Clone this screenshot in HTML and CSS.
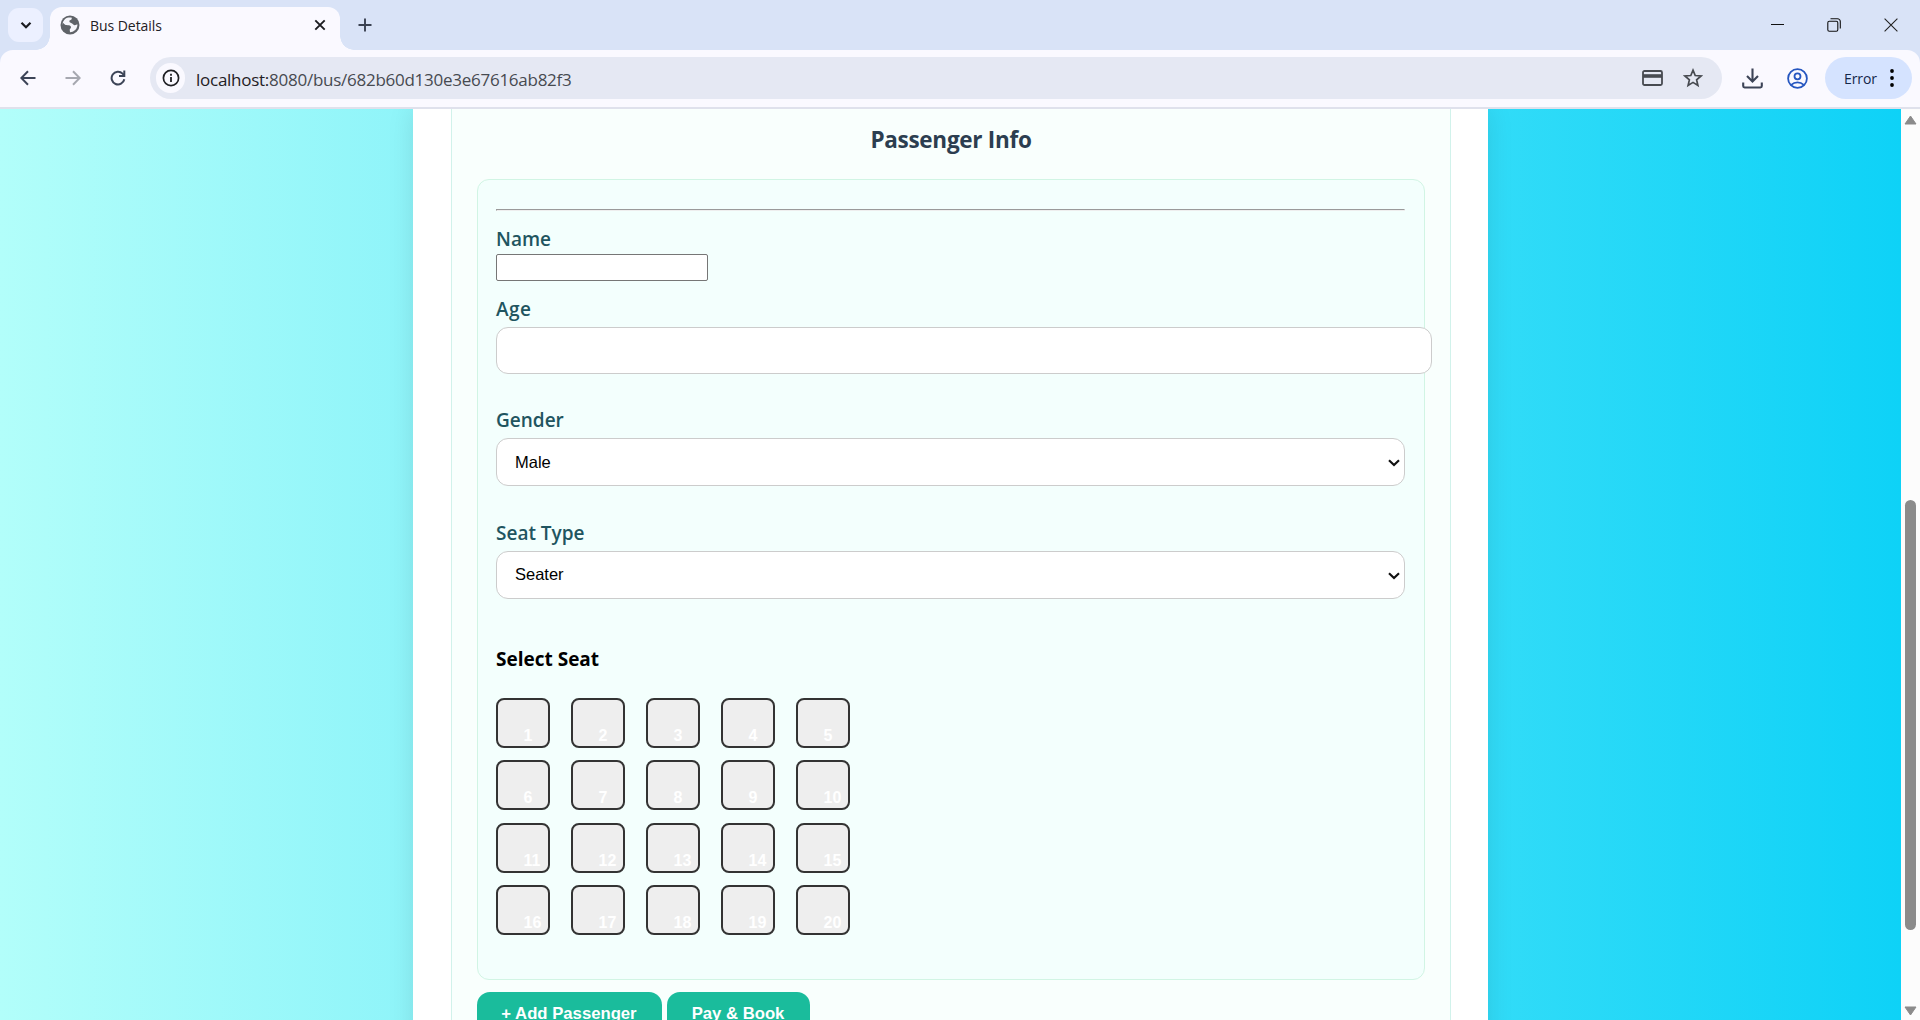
FILE: index.html
```html
<!DOCTYPE html>
<html lang="en">
<head>
<meta charset="utf-8">
<title>Bus Details</title>
<link rel="stylesheet" href="styles.css">
</head>
<body>
<div class="browser">
  <header class="tabstrip">
    <div class="tabmenu"><svg width="12" height="9" viewBox="0 0 12 9"><path d="M1.5 1.8 6 6.3l4.500-4.500" fill="none" stroke="#1b1c20" stroke-width="2.2"/></svg></div>
    <div class="tab">
      <svg width="20" height="20" viewBox="0 0 20 20"><circle cx="10" cy="10" r="9.500" fill="#5f6368"/><path d="M11.500 2.500C12.500 4 11 5 9.500 5.500 9 7 10 7.500 11 8c2 .5 2 2 3.500 2.200 1.200.2 2.200-.8 3-.7-.1 3-1.500 5.300-3.800 6.600-.6.600-1.700 1-3.700 1.200l-.3-2.500c.2-1.500 1.300-1.200 1.300-2.500 0-1.400-1.500-2-3-2L2.500 9.500C2.700 6 5 3 8.500 2.400Z" fill="#f6f6fb"/><path d="m2.700 7.500 4.800 4.800v2l2 2.800C5.500 17 2.500 14 2.500 10Z" fill="#5f6368"/></svg>
      <span class="tabtitle">Bus Details</span>
      <svg class="tabclose" width="12" height="12" viewBox="0 0 12 12"><path d="m1.300 1.300 9.400 9.400m0-9.400-9.400 9.400" stroke="#1b1c20" stroke-width="1.900"/></svg>
      <i class="flare flareleft"></i><i class="flare flareright"></i>
    </div>
    <svg class="newtab" width="14" height="14" viewBox="0 0 14 14"><path d="M7 .5v13M.5 7h13" stroke="#3b4252" stroke-width="1.900"/></svg>
    <div class="windowbtns">
      <svg width="13" height="14" viewBox="0 0 13 14"><path d="M0 6.500h13" stroke="#111"/></svg>
      <svg width="14" height="14" viewBox="0 0 14 14"><rect x=".8" y="3.200" width="10" height="10" rx="1.500" fill="none" stroke="#111" stroke-width="1.100"/><path d="M3.500.8h7a2.800 2.800 0 0 1 2.800 2.800v7" fill="none" stroke="#111" stroke-width="1.100"/></svg>
      <svg width="14" height="14" viewBox="0 0 14 14"><path d="m.6.6 12.800 12.800m0-12.800L.6 13.400" stroke="#222" stroke-width="1.100"/></svg>
    </div>
  </header>
  <nav class="toolbar">
    <svg class="back" width="16" height="16" viewBox="0 0 16 16"><path d="M15.500 8H1.500M8 1.300 1.300 8 8 14.700" fill="none" stroke="#3c4457" stroke-width="2"/></svg>
    <svg class="forward" width="16" height="16" viewBox="0 0 16 16"><path d="M.5 8h14M8 1.300 14.700 8 8 14.700" fill="none" stroke="#a6a8b0" stroke-width="2"/></svg>
    <svg class="reload" width="16" height="16" viewBox="0 0 16 16"><path d="M14.300 9.300A6.400 6.400 0 1 1 12.600 3.600l1.200 1.400" fill="none" stroke="#3c4457" stroke-width="2"/><path d="M14.300.5v5.500H9" fill="none" stroke="#3c4457" stroke-width="2"/></svg>
    <div class="omnibox">
      <span class="siteinfo"><svg width="18" height="18" viewBox="0 0 18 18"><circle cx="9" cy="9" r="7.600" fill="none" stroke="#1f2024" stroke-width="1.700"/><path d="M9 8v5M9 4.800v1.900" stroke="#1f2024" stroke-width="1.800"/></svg></span>
      <span class="url"><b>localhost:</b>8080/bus/682b60d130e3e67616ab82f3</span>
      <svg width="21" height="16" viewBox="0 0 21 16"><rect x="1" y="1" width="19" height="14" rx="1.500" fill="none" stroke="#474a50" stroke-width="1.800"/><path d="M1 6h19" stroke="#474a50" stroke-width="3.600"/></svg>
      <svg class="star" width="20" height="20" viewBox="0 0 20 20"><path d="m10 2.200 2.200 5.300 5.800.5-4.400 3.800 1.300 5.600-4.900-3-4.900 3 1.300-5.600L2 8l5.800-.5Z" fill="none" stroke="#474a50" stroke-width="1.700"/></svg>
    </div>
    <svg class="download" width="21" height="21" viewBox="0 0 21 21"><path d="M10.500.5v12.500M5 8l5.500 5.500L16 8M1.200 14.500v3.600c0 .8.500 1.400 1.400 1.400h15.800c.9 0 1.400-.6 1.400-1.400v-3.600" fill="none" stroke="#3c4457" stroke-width="2.100"/></svg>
    <svg class="profile" width="21" height="21" viewBox="0 0 21 21"><circle cx="10.500" cy="10.500" r="9.400" fill="none" stroke="#2556c0" stroke-width="1.800"/><circle cx="10.500" cy="8.300" r="3" fill="none" stroke="#2556c0" stroke-width="1.800"/><path d="M4.200 16.800c3.600-3.300 9-3.300 12.600 0" fill="none" stroke="#2556c0" stroke-width="1.800"/></svg>
    <div class="errorpill">Error<svg width="4" height="18" viewBox="0 0 4 18"><circle cx="2" cy="2" r="1.900"/><circle cx="2" cy="9" r="1.900"/><circle cx="2" cy="16" r="1.900"/></svg></div>
  </nav>
  <main class="viewport">
    <div class="page">
      <div class="container">
        <section class="booking">
          <h2>Passenger Info</h2>
          <div class="passenger">
            <hr>
            <div class="field name"><label>Name</label><input class="plain" type="text"></div>
            <div class="field age"><label>Age</label><input class="wide" type="text"></div>
            <div class="field"><label>Gender</label><div class="select">Male<svg width="12" height="8" viewBox="0 0 12 8"><path d="m1 1.300 5 4.700 5-4.700" fill="none" stroke="#111" stroke-width="2.200"/></svg></div></div>
            <div class="field"><label>Seat Type</label><div class="select">Seater<svg width="12" height="8" viewBox="0 0 12 8"><path d="m1 1.300 5 4.700 5-4.700" fill="none" stroke="#111" stroke-width="2.200"/></svg></div></div>
            <h4>Select Seat</h4>
            <div class="seats">
              <span>1</span><span>2</span><span>3</span><span>4</span><span>5</span>
              <span>6</span><span>7</span><span>8</span><span>9</span><span>10</span>
              <span>11</span><span>12</span><span>13</span><span>14</span><span>15</span>
              <span>16</span><span>17</span><span>18</span><span>19</span><span>20</span>
            </div>
          </div>
          <div class="actions"><button class="add">+ Add Passenger</button><button class="pay">Pay &amp; Book</button></div>
        </section>
      </div>
    </div>
    <aside class="scrollbar">
      <svg width="13" height="10" viewBox="0 0 13 10"><path d="M6.500 1 12 9H1Z" fill="#8b8b8b" stroke="#8b8b8b" stroke-linejoin="round"/></svg>
      <div class="thumb"></div>
      <svg width="13" height="10" viewBox="0 0 13 10"><path d="M6.500 9 12 1H1Z" fill="#8b8b8b" stroke="#8b8b8b" stroke-linejoin="round"/></svg>
    </aside>
  </main>
</div>
</body>
</html>
```
FILE: styles.css
```css
* { box-sizing: border-box; }
body { margin: 0; font-family: "Open Sans", "Noto Sans", sans-serif; }
svg { display: block; flex: none; }
.browser { width: 1920px; height: 1020px; overflow: hidden; display: flex; flex-direction: column; background: #d9e3f7; }

.tabstrip { height: 50px; flex: none; display: flex; align-items: flex-start; padding: 7px 0 0 8px; }
.tabmenu { width: 35px; height: 34px; margin-top: 1px; border-radius: 11px; background: #ecf0ff; display: flex; align-items: center; justify-content: center; }
.tab { position: relative; width: 290px; height: 43px; margin-left: 7px; padding: 0 14px 7px 10px; border-radius: 12px 12px 0 0; background: #faf9ff; display: flex; align-items: center; font-size: 14px; color: #1f2024; }
.tabtitle { margin-left: 10px; letter-spacing: -0.05px; }
.tabclose { margin-left: auto; }
.flare { position: absolute; bottom: 0; width: 14px; height: 14px; }
.flareleft { left: -14px; background: radial-gradient(circle at 0 0, transparent 13.500px, #faf9ff 14px); }
.flareright { right: -14px; background: radial-gradient(circle at 100% 0, transparent 13.500px, #faf9ff 14px); }
.newtab { margin: 11px 0 0 18px; }
.windowbtns { margin: 11px 22px 0 auto; display: flex; gap: 43px; }

.toolbar { height: 59px; flex: none; display: flex; align-items: center; padding: 0 8px 1px 20px; background: #faf9ff; border-bottom: 2px solid #dfe1ec; border-radius: 13px 13px 0 0; }
.forward { margin-left: 29px; }
.reload { margin-left: 29px; }
.omnibox { width: 1572px; height: 42px; margin-left: 24px; padding: 0 19px 0 6px; border-radius: 21px; background: #e5e8f3; display: flex; align-items: center; }
.siteinfo { width: 29px; height: 30px; border-radius: 15px; background: #faf9ff; display: flex; align-items: center; justify-content: center; }
.url { margin: 0 auto 0 11px; padding-top: 2px; font-size: 17px; color: #474a50; letter-spacing: -0.26px; }
.url b { font-weight: 400; color: #1f2024; }
.star { margin-left: 20px; }
.download { margin-left: 20px; }
.profile { margin-left: 24px; }
.errorpill { width: 87px; height: 42px; margin-left: auto; padding: 0 18px 0 19px; border-radius: 21px; background: #d5e3ff; color: #14274a; font-size: 14px; letter-spacing: -0.1px; display: flex; align-items: center; justify-content: space-between; }

.viewport { height: 911px; display: flex; }
.page { width: 1901px; padding-left: 413px; background: linear-gradient(to right, #b2fefa, #0ed2f7); overflow: hidden; }
.container { width: 1075px; height: 960px; padding: 0 37px 0 38px; background: #fff; box-shadow: 0 0 25px rgba(0, 0, 0, 0.1); }
.booking { height: 960px; padding: 15px 25px 0; border: solid #d1f2eb; border-width: 0 1px; background: #f9fffd; }
h2 { margin: 0; height: 32px; line-height: 32px; text-align: center; font-size: 22.500px; font-weight: 700; letter-spacing: -0.28px; color: #2c3e50; }
.passenger { height: 801px; margin-top: 23px; padding: 29px 19px 0 18px; border: 1px solid #d1f5e4; border-radius: 12px; background: #f3fffd; }
hr { height: 2px; margin: 0; border: solid; border-width: 1px 1px 1px 1px; border-color: #9a9a9a #eee #eee #9a9a9a; }
label { display: block; height: 26px; line-height: 24px; font-size: 19px; font-weight: 600; color: #1f5560; }
.field { height: 112.500px; }
.name { height: 70px; margin-top: 16px; }
.age { height: 111px; }
.field input { display: block; padding: 0 18px; background: #fff; outline: 0; }
.plain { width: 212px; height: 27px; border: 1px solid #767676; border-radius: 2px; }
.name label { height: 27px; }
.age label { height: 30px; letter-spacing: 0.4px; }
.wide { width: 936px; height: 47px; border: 1px solid #ccc; border-radius: 12px; }
.field label + .select { margin-top: 4px; }
.select { height: 48px; padding: 0 4px 0 18px; border: 1px solid #ccc; border-radius: 12px; background: #fff; display: flex; align-items: center; justify-content: space-between; font: 16.500px "Liberation Sans", Arial, sans-serif; }
.select svg { margin-top: 2px; }
h4 { margin: 11px 0 0; height: 30px; line-height: 30px; font-size: 19px; font-weight: 700; color: #000; }
.seats { margin-top: 24px; display: grid; grid-template-columns: repeat(5, 54px); grid-auto-rows: 50px; gap: 12.400px 21px; font: bold 16px "Liberation Sans", Arial, sans-serif; color: #fff; }
.seats span { padding: 26px 0 0 25.500px; border: 2px solid #333; border-radius: 8px; background: #eee; line-height: 20px; }
.actions { margin-top: 12px; display: flex; gap: 5px; }
.actions button { height: 46px; padding: 0 1px 2px 0; border: 0; border-radius: 13px; background: #1abc9c; color: #fff; font: bold 16.700px "Liberation Sans", Arial, sans-serif; }
.add { width: 185px; }
.pay { width: 143px; }
.scrollbar { width: 19px; background: #fcfcfc; display: flex; flex-direction: column; align-items: center; padding: 6px 0 4px; }
.thumb { width: 11px; height: 430px; margin: 375px 0 auto; border-radius: 6px; background: #8b8b8b; }
```
